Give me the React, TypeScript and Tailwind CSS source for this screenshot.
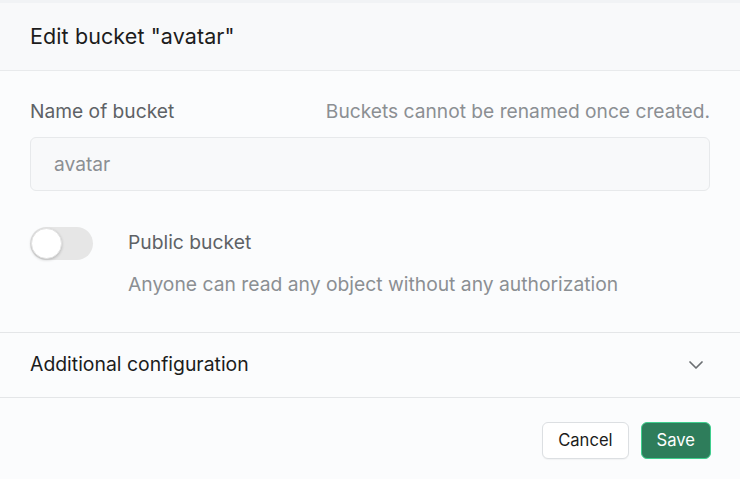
import { ChevronDown } from 'lucide-react';

export default function App() {
  return (
    <div
      className="w-[740px] h-[479px] bg-[#fbfcfd] border-t-[3px] border-[#f1f3f5] text-[#1c1c1c] overflow-hidden"
      style={{ fontFamily: 'Inter, "Noto Sans", sans-serif' }}
    >
      {/* Header */}
      <div className="h-[68px] flex items-center px-[30px] bg-[#f8f9fa] border-b border-[#e8eaec]">
        <h2 className="text-[21.5px] tracking-[0.1px]">Edit bucket "avatar"</h2>
      </div>

      {/* Body */}
      <div className="px-[30px] pt-[27px] border-b border-[#e4e6e8]">
        <div className="flex justify-between items-center h-[26px] text-[19.2px]">
          <span className="text-[#5e6266]">Name of bucket</span>
          <span className="text-[#8b8f93]">Buckets cannot be renamed once created.</span>
        </div>
        <div className="mt-[13px] h-[54px] rounded-[6px] border border-[#e7e9eb] bg-[#f8f9fa] flex items-center px-[23px] text-[19.2px] text-[#8b8f93]">
          avatar
        </div>

        <div className="flex mt-[36px] pb-[35px]">
          <button className="w-[63px] h-[33px] rounded-full bg-[#e6e6e6] flex items-center px-[1px] shrink-0">
            <span className="w-[31px] h-[31px] rounded-full bg-white shadow-[0_1px_3px_rgba(0,0,0,0.2)] border border-[#e3e3e3]" />
          </button>
          <div className="ml-[35px] pt-[2px] text-[19.3px]">
            <div className="text-[#5e6266] leading-[26px]">Public bucket</div>
            <div className="mt-[16px] text-[#8b8f93] leading-[26px]">
              Anyone can read any object without any authorization
            </div>
          </div>
        </div>
      </div>

      {/* Additional configuration */}
      <div className="h-[65px] px-[30px] flex items-center justify-between border-b border-[#e4e6e8]">
        <span className="text-[19.4px] text-[#1c1c1c]">Additional configuration</span>
        <ChevronDown className="w-[24px] h-[24px] text-[#6b6f73] mr-[2px]" strokeWidth={1.75} />
      </div>

      {/* Footer */}
      <div className="flex justify-end gap-[12px] px-[29px] pt-[24px]">
        <button className="h-[37px] px-[15px] rounded-[6px] border border-[#dcdfe2] bg-white text-[16.6px] text-[#1c1c1c] shadow-[0_1px_1px_rgba(0,0,0,0.04)]">
          Cancel
        </button>
        <button className="h-[37px] px-[15px] rounded-[6px] border border-[#3ecf8e] bg-[#2e7d5b] text-[16.6px] text-white">
          Save
        </button>
      </div>
    </div>
  );
}
